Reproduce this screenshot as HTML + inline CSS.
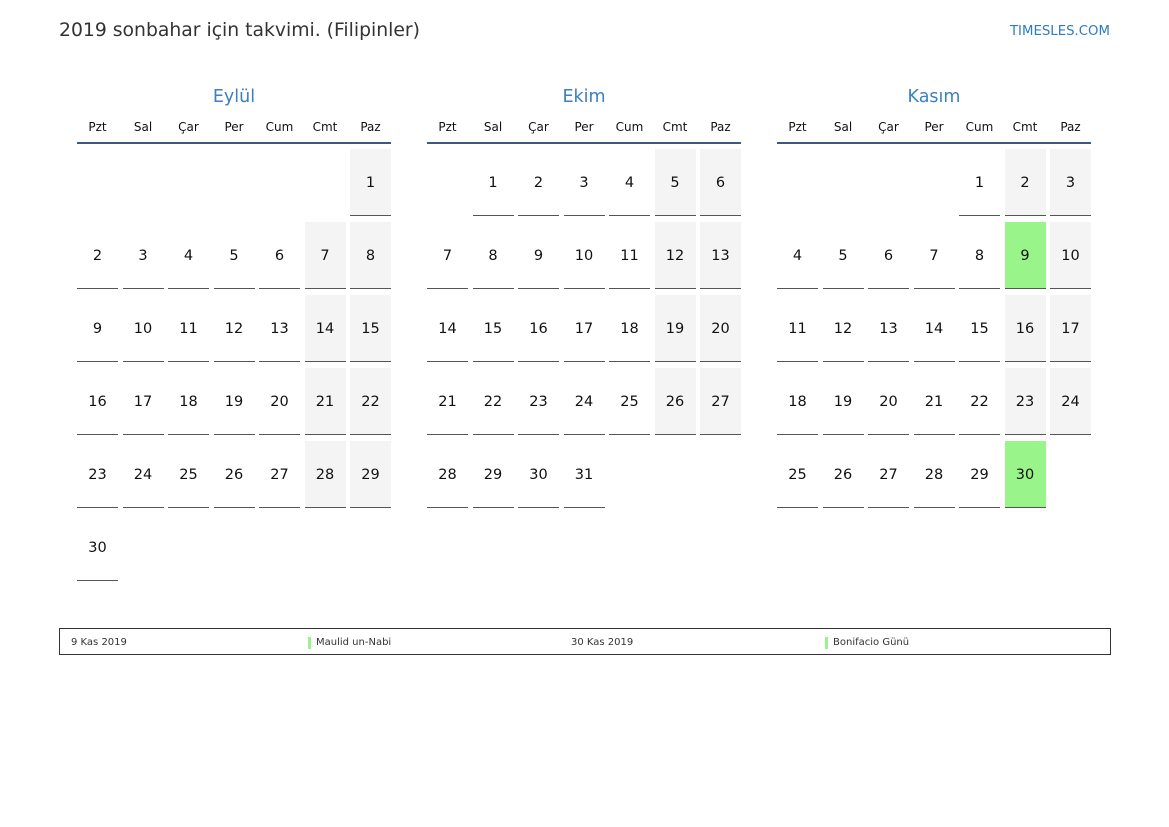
<!DOCTYPE html>
<html><head><meta charset="utf-8">
<style>
*{margin:0;padding:0;box-sizing:border-box}
body{width:1169px;height:827px;background:#fff;position:relative;font-family:"DejaVu Sans","Liberation Sans",sans-serif;color:#111;overflow:hidden}
.title{position:absolute;left:59px;top:20px;font-size:18.8px;color:#333}
.brand{position:absolute;right:59px;top:24px;font-size:13.3px;color:#2f7bbf}
.m{position:absolute;top:85px;width:314px}
.mn{text-align:center;font-size:17.5px;color:#3a80c2;height:24px;line-height:24px}
.dn{display:grid;grid-template-columns:repeat(7,41px);column-gap:4.5px;margin-top:10px;height:25px;border-bottom:2px solid #3d5a7e;font-size:12px}
.dn span{text-align:center;line-height:16px}
.g{display:grid;grid-template-columns:repeat(7,41px);column-gap:4.5px;row-gap:6px;grid-auto-rows:67px;margin-top:5px}
.g b{font-weight:normal;font-size:14.5px;display:flex;align-items:center;justify-content:center;border-bottom:1.5px solid #555;padding-top:2px}
.g b.w{background:#f4f4f4}
.g b.h{background:#99f58a}
.hol{position:absolute;left:59px;top:628px;width:1052px;height:27px;border:1.5px solid #333;font-size:10px;color:#333}
.hol span{position:absolute;top:8px;line-height:12px;display:flex;align-items:center}
.bar{display:inline-block;width:3px;height:12px;background:#99f58a;margin-right:5px}
</style></head><body>
<div class="title">2019 sonbahar için takvimi. (Filipinler)</div>
<div class="brand">TIMESLES.COM</div>

<div class="m" style="left:77px">
<div class="mn">Eylül</div>
<div class="dn"><span>Pzt</span><span>Sal</span><span>Çar</span><span>Per</span><span>Cum</span><span>Cmt</span><span>Paz</span></div>
<div class="g">
<i></i><i></i><i></i><i></i><i></i><i></i><b class="w">1</b>
<b>2</b><b>3</b><b>4</b><b>5</b><b>6</b><b class="w">7</b><b class="w">8</b>
<b>9</b><b>10</b><b>11</b><b>12</b><b>13</b><b class="w">14</b><b class="w">15</b>
<b>16</b><b>17</b><b>18</b><b>19</b><b>20</b><b class="w">21</b><b class="w">22</b>
<b>23</b><b>24</b><b>25</b><b>26</b><b>27</b><b class="w">28</b><b class="w">29</b>
<b>30</b>
</div></div>

<div class="m" style="left:427px">
<div class="mn">Ekim</div>
<div class="dn"><span>Pzt</span><span>Sal</span><span>Çar</span><span>Per</span><span>Cum</span><span>Cmt</span><span>Paz</span></div>
<div class="g">
<i></i><b>1</b><b>2</b><b>3</b><b>4</b><b class="w">5</b><b class="w">6</b>
<b>7</b><b>8</b><b>9</b><b>10</b><b>11</b><b class="w">12</b><b class="w">13</b>
<b>14</b><b>15</b><b>16</b><b>17</b><b>18</b><b class="w">19</b><b class="w">20</b>
<b>21</b><b>22</b><b>23</b><b>24</b><b>25</b><b class="w">26</b><b class="w">27</b>
<b>28</b><b>29</b><b>30</b><b>31</b>
</div></div>

<div class="m" style="left:777px">
<div class="mn">Kasım</div>
<div class="dn"><span>Pzt</span><span>Sal</span><span>Çar</span><span>Per</span><span>Cum</span><span>Cmt</span><span>Paz</span></div>
<div class="g">
<i></i><i></i><i></i><i></i><b>1</b><b class="w">2</b><b class="w">3</b>
<b>4</b><b>5</b><b>6</b><b>7</b><b>8</b><b class="h">9</b><b class="w">10</b>
<b>11</b><b>12</b><b>13</b><b>14</b><b>15</b><b class="w">16</b><b class="w">17</b>
<b>18</b><b>19</b><b>20</b><b>21</b><b>22</b><b class="w">23</b><b class="w">24</b>
<b>25</b><b>26</b><b>27</b><b>28</b><b>29</b><b class="h">30</b>
</div></div>

<div class="hol">
<span style="left:11px">9 Kas 2019</span>
<span style="left:248px"><i class="bar"></i>Maulid un-Nabi</span>
<span style="left:511px">30 Kas 2019</span>
<span style="left:765px"><i class="bar"></i>Bonifacio Günü</span>
</div>
</body></html>
